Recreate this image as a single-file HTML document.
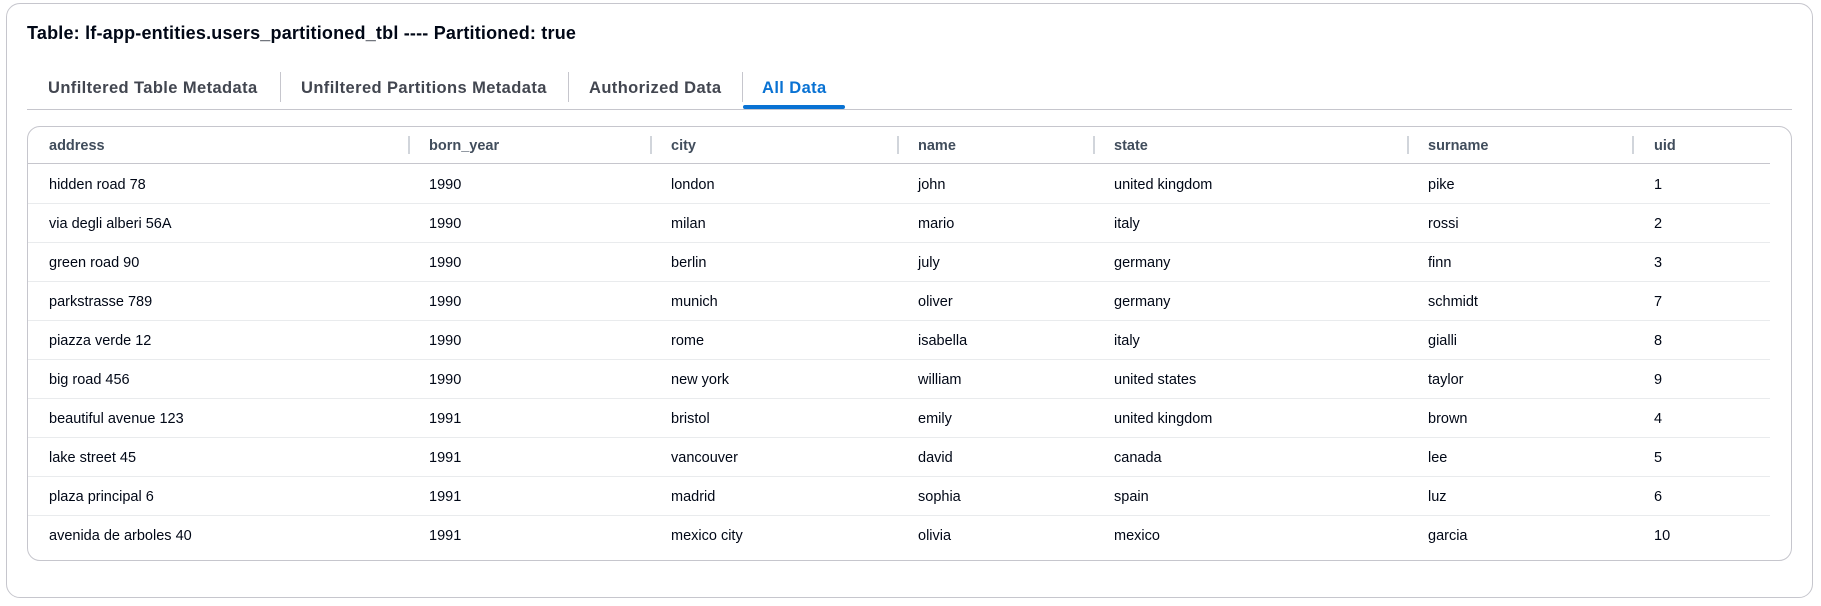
<!DOCTYPE html>
<html><head><meta charset="utf-8"><style>
*{box-sizing:border-box;margin:0;padding:0}
body{width:1821px;height:606px;background:#fff;font-family:"Liberation Sans",sans-serif;color:#000716;position:relative;overflow:hidden}
.card{position:absolute;left:6px;top:3px;width:1807px;height:595px;border:1px solid #c6c6cd;border-radius:14px}
.title{position:absolute;left:27px;top:23px;font-size:18px;font-weight:bold;letter-spacing:0.2px}
.tab{position:absolute;top:79px;font-size:16.5px;font-weight:bold;color:#424650;white-space:nowrap;letter-spacing:0.4px}
.sep{position:absolute;top:72px;width:1px;height:30px;background:#c6c6cd}
.tabline{position:absolute;left:27px;top:109px;width:1765px;height:1px;background:#c6c6cd}
.active{position:absolute;left:743px;top:105px;width:102px;height:4px;border-radius:2px;background:#0972d3}
.tbl{position:absolute;left:27px;top:126px;width:1765px;height:435px;border:1px solid #c6c6cd;border-radius:13px}
.h{position:absolute;top:138px;font-size:14.5px;font-weight:bold;color:#414d5c}
.hs{position:absolute;top:136px;width:2px;height:18px;background:#d1d5db}
.hl{position:absolute;left:28px;top:163px;width:1742px;height:1px;background:#c6c6cd}
.rl{position:absolute;left:28px;width:1742px;height:1px;background:#e9ebed}
.c{position:absolute;font-size:14.5px;color:#000716;white-space:nowrap}
</style></head><body>
<div class="card"></div>
<div class="title">Table: lf-app-entities.users_partitioned_tbl ---- Partitioned: true</div>
<div class="tab" style="left:48px">Unfiltered Table Metadata</div>
<div class="sep" style="left:280px"></div>
<div class="tab" style="left:301px">Unfiltered Partitions Metadata</div>
<div class="sep" style="left:568px"></div>
<div class="tab" style="left:589px">Authorized Data</div>
<div class="sep" style="left:742px"></div>
<div class="tab" style="left:762px;color:#0972d3">All Data</div>
<div class="tabline"></div><div class="active"></div>
<div class="tbl"></div>
<div class="h" style="left:49px">address</div>
<div class="hs" style="left:408px"></div><div class="h" style="left:429px">born_year</div>
<div class="hs" style="left:650px"></div><div class="h" style="left:671px">city</div>
<div class="hs" style="left:897px"></div><div class="h" style="left:918px">name</div>
<div class="hs" style="left:1093px"></div><div class="h" style="left:1114px">state</div>
<div class="hs" style="left:1407px"></div><div class="h" style="left:1428px">surname</div>
<div class="hs" style="left:1632px"></div><div class="h" style="left:1654px">uid</div>
<div class="hl"></div>
<div id="rows"></div>
<script>
var d=[["hidden road 78","1990","london","john","united kingdom","pike","1"],
["via degli alberi 56A","1990","milan","mario","italy","rossi","2"],
["green road 90","1990","berlin","july","germany","finn","3"],
["parkstrasse 789","1990","munich","oliver","germany","schmidt","7"],
["piazza verde 12","1990","rome","isabella","italy","gialli","8"],
["big road 456","1990","new york","william","united states","taylor","9"],
["beautiful avenue 123","1991","bristol","emily","united kingdom","brown","4"],
["lake street 45","1991","vancouver","david","canada","lee","5"],
["plaza principal 6","1991","madrid","sophia","spain","luz","6"],
["avenida de arboles 40","1991","mexico city","olivia","mexico","garcia","10"]];
var xs=[49,429,671,918,1114,1428,1654],h="";
d.forEach(function(r,i){var y=177+i*39;r.forEach(function(t,j){h+='<div class="c" style="left:'+xs[j]+'px;top:'+y+'px">'+t+'</div>'});if(i<9)h+='<div class="rl" style="top:'+(203+i*39)+'px"></div>'});
document.getElementById("rows").innerHTML=h;
</script>
</body></html>
